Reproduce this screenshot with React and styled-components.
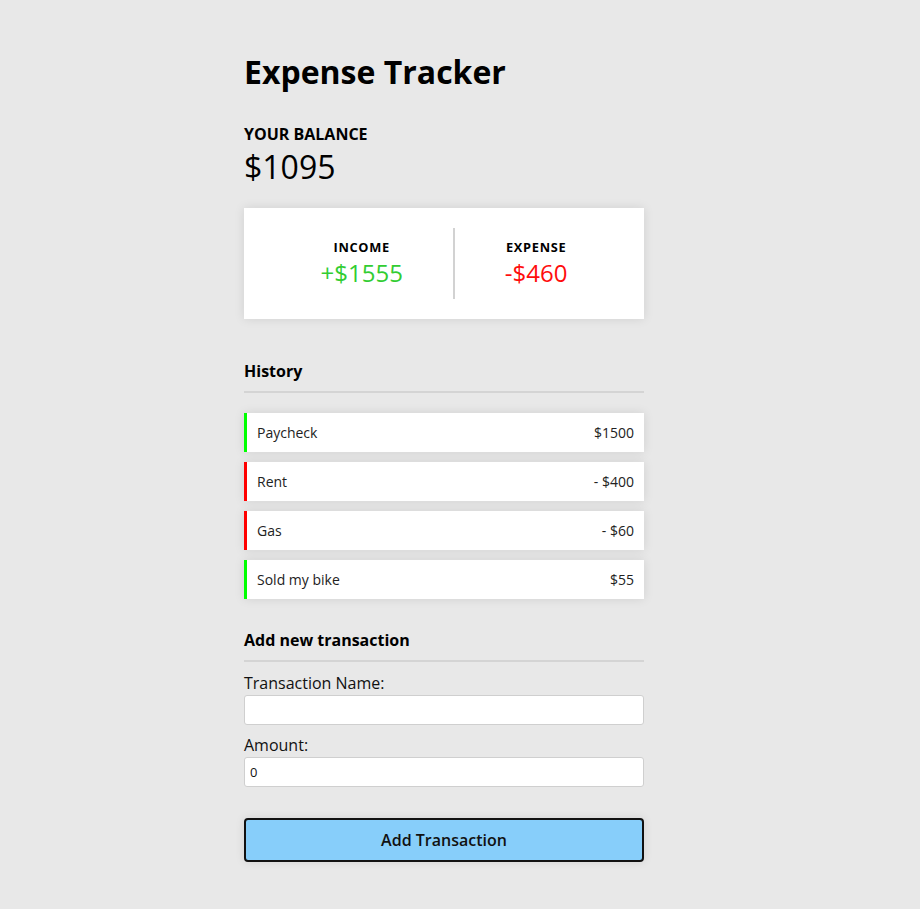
import React from 'react';
import styled, { createGlobalStyle } from 'styled-components';

const GlobalStyle = createGlobalStyle`
  * {
    box-sizing: border-box;
  }

  body {
    margin: 0;
    background-color: #e8e8e8;
    font-family: 'Open Sans', 'Liberation Sans', sans-serif;
    color: #000;
  }
`;

const Page = styled.div`
  min-height: 100vh;
  padding: 50px 32px 40px 0;
`;

const Container = styled.div`
  width: 400px;
  margin: 0 auto;
`;

const Title = styled.h1`
  font-size: 32px;
  font-weight: 700;
  margin: 0 0 30px;
`;

const BalanceLabel = styled.h4`
  font-size: 16px;
  font-weight: 700;
  text-transform: uppercase;
  margin: 0;
`;

const Balance = styled.div`
  font-size: 32px;
  margin: 0;
`;

const SummaryCard = styled.div`
  display: flex;
  justify-content: center;
  background-color: #fff;
  padding: 20px;
  margin: 20px 0 41px;
  box-shadow: 0 0 10px rgba(0, 0, 0, 0.1);
`;

const SummaryItem = styled.div`
  padding: 10px 50px;
  text-align: center;
  border-right: ${(p) => (p.$divider ? '2px solid #d2d2d2' : 'none')};
`;

const SummaryLabel = styled.div`
  font-size: 12.8px;
  font-weight: 700;
  letter-spacing: 0.7px;
  text-transform: uppercase;
`;

const Money = styled.div`
  font-size: 24px;
  color: ${(p) => (p.$plus ? '#32cd32' : '#ff0d0d')};
`;

const SectionTitle = styled.h3`
  font-size: 16px;
  font-weight: 700;
  margin: 0 0 ${(p) => p.$after || 0}px;
  padding-bottom: 9px;
  border-bottom: 2px solid #d4d4d4;
`;

const List = styled.ul`
  list-style: none;
  padding: 0;
  margin: 20px 0 30px;
  display: flex;
  flex-direction: column;
  gap: 10px;
`;

const Item = styled.li`
  display: flex;
  justify-content: space-between;
  background-color: #fff;
  color: #222;
  font-size: 14px;
  padding: 10px;
  border-left: 3px solid ${(p) => (p.$plus ? '#00ff00' : '#ff0000')};
  box-shadow: 0 0 10px rgba(0, 0, 0, 0.1);
`;

const Form = styled.form`
  display: flex;
  flex-direction: column;
`;

const Label = styled.label`
  display: block;
  font-size: 16px;
  margin-top: ${(p) => p.$top || 0}px;
  color: #111;
`;

const Input = styled.input`
  display: block;
  width: 100%;
  height: 30px;
  margin-top: 1px;
  padding: 0 5px;
  font-family: 'Open Sans', 'Liberation Sans', sans-serif;
  font-size: 13px;
  background-color: #fff;
  border: 1px solid #cfcfcf;
  border-radius: 3px;
  color: #111;
  outline: none;
`;

const Button = styled.button`
  width: 100%;
  height: 44px;
  margin-top: 31px;
  background-color: #87cefa;
  border: 2px solid #111;
  border-radius: 4px;
  font-family: 'Open Sans', 'Liberation Sans', sans-serif;
  font-size: 16px;
  font-weight: 600;
  color: #111;
  cursor: pointer;
  box-shadow: 0 0 10px rgba(0, 0, 0, 0.1);
`;

const transactions = [
  { name: 'Paycheck', amount: '$1500', plus: true },
  { name: 'Rent', amount: '- $400', plus: false },
  { name: 'Gas', amount: '- $60', plus: false },
  { name: 'Sold my bike', amount: '$55', plus: true },
];

const App = () => {
  return (
    <>
      <GlobalStyle />
      <Page>
        <Container>
          <Title>Expense Tracker</Title>
          <BalanceLabel>Your Balance</BalanceLabel>
          <Balance>$1095</Balance>

          <SummaryCard>
            <SummaryItem $divider>
              <SummaryLabel>Income</SummaryLabel>
              <Money $plus>+$1555</Money>
            </SummaryItem>
            <SummaryItem>
              <SummaryLabel>Expense</SummaryLabel>
              <Money>-$460</Money>
            </SummaryItem>
          </SummaryCard>

          <SectionTitle>History</SectionTitle>
          <List>
            {transactions.map((t) => (
              <Item key={t.name} $plus={t.plus}>
                <span>{t.name}</span>
                <span>{t.amount}</span>
              </Item>
            ))}
          </List>

          <SectionTitle $after={10}>Add new transaction</SectionTitle>
          <Form onSubmit={(e) => e.preventDefault()}>
            <Label htmlFor="name">Transaction Name:</Label>
            <Input id="name" type="text" />
            <Label htmlFor="amount" $top={9}>
              Amount:
            </Label>
            <Input id="amount" type="number" defaultValue={0} />
            <Button type="submit">Add Transaction</Button>
          </Form>
        </Container>
      </Page>
    </>
  );
};

export default App;
